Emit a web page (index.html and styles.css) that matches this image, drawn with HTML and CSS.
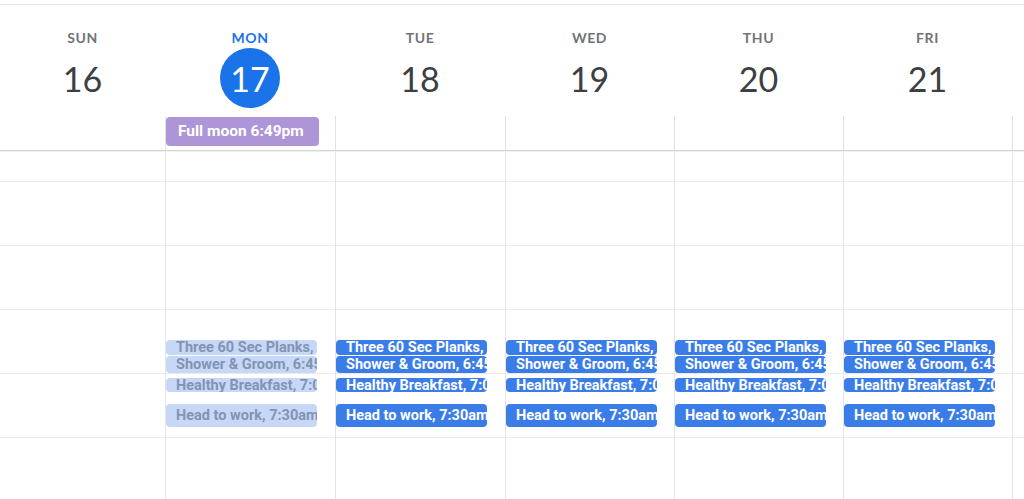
FILE: index.html
```html
<!DOCTYPE html>
<html>
<head>
<meta charset="utf-8">
<link rel="stylesheet" href="styles.css">
</head>
<body>
<div class="cal">
  <div class="topline"></div>
  <div class="head">
    <div class="dh"><div class="dname">SUN</div><div class="dnum">16</div></div>
    <div class="dh today"><div class="dname">MON</div><div class="dnum">17</div></div>
    <div class="dh"><div class="dname">TUE</div><div class="dnum">18</div></div>
    <div class="dh"><div class="dname">WED</div><div class="dnum">19</div></div>
    <div class="dh"><div class="dname">THU</div><div class="dnum">20</div></div>
    <div class="dh"><div class="dname">FRI</div><div class="dnum">21</div></div>
    <div class="dh"></div>
  </div>
  <div class="allday">
    <div class="ad first"></div>
    <div class="ad"><div class="chip moon">Full moon 6:49pm</div></div>
    <div class="ad"></div>
    <div class="ad"></div>
    <div class="ad"></div>
    <div class="ad"></div>
    <div class="ad"></div>
  </div>
  <div class="grid">
    <div class="col first">
      <div class="slot s0"></div><div class="slot"></div><div class="slot"></div><div class="slot"></div><div class="slot"></div><div class="slot"></div>
    </div>
    <div class="col past">
      <div class="slot s0"></div><div class="slot"></div><div class="slot"></div><div class="slot"></div><div class="slot"></div><div class="slot"></div>
      <div class="ev e1">Three 60 Sec Planks, 6:30am</div>
      <div class="ev e2">Shower &amp; Groom, 6:45am</div>
      <div class="ev e3">Healthy Breakfast, 7:05am</div>
      <div class="ev e4">Head to work, 7:30am</div>
    </div>
    <div class="col">
      <div class="slot s0"></div><div class="slot"></div><div class="slot"></div><div class="slot"></div><div class="slot"></div><div class="slot"></div>
      <div class="ev e1">Three 60 Sec Planks, 6:30am</div>
      <div class="ev e2">Shower &amp; Groom, 6:45am</div>
      <div class="ev e3">Healthy Breakfast, 7:05am</div>
      <div class="ev e4">Head to work, 7:30am</div>
    </div>
    <div class="col">
      <div class="slot s0"></div><div class="slot"></div><div class="slot"></div><div class="slot"></div><div class="slot"></div><div class="slot"></div>
      <div class="ev e1">Three 60 Sec Planks, 6:30am</div>
      <div class="ev e2">Shower &amp; Groom, 6:45am</div>
      <div class="ev e3">Healthy Breakfast, 7:05am</div>
      <div class="ev e4">Head to work, 7:30am</div>
    </div>
    <div class="col">
      <div class="slot s0"></div><div class="slot"></div><div class="slot"></div><div class="slot"></div><div class="slot"></div><div class="slot"></div>
      <div class="ev e1">Three 60 Sec Planks, 6:30am</div>
      <div class="ev e2">Shower &amp; Groom, 6:45am</div>
      <div class="ev e3">Healthy Breakfast, 7:05am</div>
      <div class="ev e4">Head to work, 7:30am</div>
    </div>
    <div class="col">
      <div class="slot s0"></div><div class="slot"></div><div class="slot"></div><div class="slot"></div><div class="slot"></div><div class="slot"></div>
      <div class="ev e1">Three 60 Sec Planks, 6:30am</div>
      <div class="ev e2">Shower &amp; Groom, 6:45am</div>
      <div class="ev e3">Healthy Breakfast, 7:05am</div>
      <div class="ev e4">Head to work, 7:30am</div>
    </div>
    <div class="col">
      <div class="slot s0"></div><div class="slot"></div><div class="slot"></div><div class="slot"></div><div class="slot"></div><div class="slot"></div>
    </div>
  </div>
</div>
</body>
</html>
```
FILE: styles.css
```css
html, body {
  margin: 0;
  padding: 0;
  background: #fff;
}
.cal {
  width: 1024px;
  height: 499px;
  overflow: hidden;
  font-family: Roboto, "Liberation Sans", sans-serif;
}
.topline {
  height: 4px;
  border-bottom: 1px solid #e6e6e6;
}
.head, .allday, .grid {
  display: grid;
  grid-template-columns: 165px 170px 170px 169px 169px 169px 1fr;
}
.dh {
  display: flex;
  flex-direction: column;
  align-items: center;
  padding-top: 25px;
  height: 86px;
}
.dname {
  font-family: Lato, Roboto, sans-serif;
  font-size: 14px;
  line-height: 16px;
  font-weight: 700;
  letter-spacing: 0.6px;
  color: #707479;
}
.dnum {
  margin-top: 2px;
  width: 60px;
  height: 60px;
  border-radius: 50%;
  display: flex;
  align-items: center;
  justify-content: center;
  font-family: Lato, Roboto, sans-serif;
  font-size: 34px;
  color: #3c4043;
}
.today .dname { color: #1a73e8; }
.today .dnum {
  background: #1a73e8;
  color: #fff;
}
.allday {
  height: 34px;
  border-bottom: 1px solid #d6d6d6;
  box-shadow: 0 1px 1px rgba(0,0,0,0.06);
}
.ad {
  border-left: 1px solid #e3e3e3;
  padding-top: 1px;
}
.ad.first { border-left: none; }
.chip.moon {
  width: 153px;
  height: 29px;
  box-sizing: border-box;
  border-radius: 4px;
  background: #ad95d8;
  color: #fff;
  font-size: 15.5px;
  font-weight: 700;
  line-height: 29px;
  padding-left: 12px;
  white-space: nowrap;
  overflow: hidden;
}
.col {
  position: relative;
  border-left: 1px solid #e6e6e6;
  display: flex;
  flex-direction: column;
}
.col.first { border-left: none; }
.slot {
  height: 63px;
  flex: none;
  border-bottom: 1px solid #ebebeb;
}
.slot.s0 { height: 30px; }
.ev {
  position: absolute;
  left: 0;
  width: 151px;
  box-sizing: border-box;
  border-radius: 4px;
  background: #3b7de8;
  color: #fff;
  font-size: 14.5px;
  font-weight: 700;
  padding-left: 10px;
  white-space: nowrap;
  overflow: hidden;
}
.past .ev {
  background: #c6d8f6;
  color: #8393b4;
}
.e1 { top: 189px; height: 15px; line-height: 15px; }
.e2 { top: 205px; height: 17px; line-height: 17px; }
.e3 { top: 227px; height: 14px; line-height: 15px; }
.e4 { top: 253px; height: 23px; line-height: 24px; }
```
